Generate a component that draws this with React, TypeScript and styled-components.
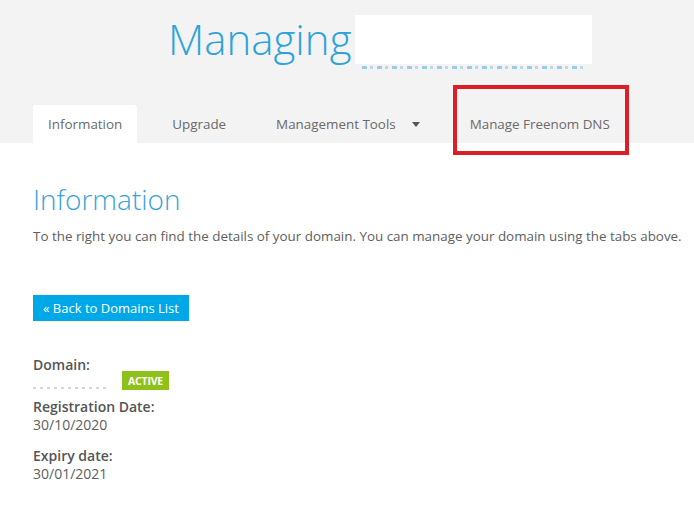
import React from "react";
import styled, { createGlobalStyle } from "styled-components";

const Global = createGlobalStyle`
  html, body { margin: 0; padding: 0; background: #ffffff; }
  body { font-family: "Open Sans", "Liberation Sans", sans-serif; color: #555; }
  * { box-sizing: border-box; }
`;

const Page = styled.div`
  position: relative;
  width: 694px;
  height: 505px;
  overflow: hidden;
  background: #fff;
`;

const Header = styled.header`
  background: #f3f3f3;
  height: 143px;
  display: flex;
  flex-direction: column;
`;

const TitleRow = styled.div`
  display: flex;
  align-items: flex-start;
  padding-left: 168px;
  padding-top: 11px;
  height: 105px;
  flex-shrink: 0;
`;

const Title = styled.h1`
  margin: 0;
  font-family: "Open Sans", sans-serif;
  font-weight: 300;
  font-size: 42px;
  line-height: 56px;
  color: #2ea3d9;
`;

const Masked = styled.div`
  margin-left: 4px;
  margin-top: 4px;
  width: 237px;
  height: 56px;
  display: flex;
  flex-direction: column;
`;

const MaskBox = styled.div`
  height: 49px;
  background: #ffffff;
`;

const MaskTail = styled.div`
  margin: 2px 7px 0 7px;
  height: 3px;
  background: repeating-linear-gradient(
    90deg,
    #5ab4e0 0 5px,
    transparent 5px 8px,
    #8ccbea 8px 11px,
    transparent 11px 15px
  );
  opacity: 0.6;
`;

const Tabs = styled.nav`
  display: flex;
  gap: 20px;
  padding-left: 33px;
  height: 38px;
`;

const Tab = styled.div<{ $active?: boolean }>`
  display: flex;
  align-items: center;
  gap: 16px;
  padding: 0 15px;
  height: 38px;
  font-size: 13.4px;
  color: #6a6a6a;
  background: ${(p) => (p.$active ? "#ffffff" : "transparent")};
  border-radius: 3px 3px 0 0;
  white-space: nowrap;
`;

const Caret = styled.span`
  width: 0;
  height: 0;
  border-left: 4px solid transparent;
  border-right: 4px solid transparent;
  border-top: 5px solid #555;
  margin-top: 1px;
`;

const Highlight = styled.div`
  position: absolute;
  left: 453px;
  top: 85px;
  width: 176px;
  height: 70px;
  border: 4px solid #dc1f26;
  pointer-events: none;
`;

const Content = styled.main`
  padding: 38px 0 0 33px;
  display: flex;
  flex-direction: column;
`;

const Heading = styled.h2`
  margin: 0;
  font-weight: 300;
  font-size: 28px;
  line-height: 36px;
  color: #3aa3d6;
`;

const Lead = styled.p`
  margin: 10px 0 0 0;
  font-size: 13.4px;
  line-height: 18px;
  color: #5e5e5e;
  white-space: nowrap;
`;

const BackButton = styled.a`
  margin-top: 50px;
  align-self: flex-start;
  display: inline-flex;
  align-items: center;
  height: 26px;
  padding: 0 10px;
  background: #00a8e8;
  color: #fff;
  font-size: 13px;
  text-decoration: none;
`;

const Details = styled.dl`
  margin: 34px 0 0 0;
  display: flex;
  flex-direction: column;
`;

const Label = styled.dt<{ $gap?: number }>`
  margin-top: ${(p) => p.$gap ?? 0}px;
  font-size: 14px;
  font-weight: 600;
  line-height: 19px;
  color: #555;
`;

const Value = styled.dd`
  margin: 0;
  font-size: 14px;
  line-height: 17px;
  color: #5e5e5e;
`;

const DomainRow = styled.dd`
  margin: -3px 0 0 0;
  display: flex;
  align-items: flex-start;
  gap: 14px;
  height: 26px;
`;

const Dots = styled.span`
  width: 75px;
  height: 2px;
  margin-top: 16px;
  background: repeating-linear-gradient(90deg, #d6d6d6 0 3px, transparent 3px 7px);
`;

const Badge = styled.span`
  display: inline-flex;
  align-items: center;
  justify-content: center;
  width: 47px;
  height: 19px;
  background: #8fc11b;
  color: #fff;
  font-size: 10.5px;
  font-weight: 700;
  letter-spacing: -0.2px;
`;

export default function App() {
  return (
    <Page>
      <Global />
      <Header>
        <TitleRow>
          <Title>Managing</Title>
          <Masked>
            <MaskBox />
            <MaskTail />
          </Masked>
        </TitleRow>
        <Tabs>
          <Tab $active>Information</Tab>
          <Tab>Upgrade</Tab>
          <Tab>
            Management Tools <Caret />
          </Tab>
          <Tab>Manage Freenom DNS</Tab>
        </Tabs>
      </Header>
      <Highlight />
      <Content>
        <Heading>Information</Heading>
        <Lead>
          To the right you can find the details of your domain. You can manage your domain using the tabs above.
        </Lead>
        <BackButton href="#">« Back to Domains List</BackButton>
        <Details>
          <Label>Domain:</Label>
          <DomainRow>
            <Dots />
            <Badge>ACTIVE</Badge>
          </DomainRow>
          <Label>Registration Date:</Label>
          <Value>30/10/2020</Value>
          <Label $gap={13}>Expiry date:</Label>
          <Value>30/01/2021</Value>
        </Details>
      </Content>
    </Page>
  );
}
